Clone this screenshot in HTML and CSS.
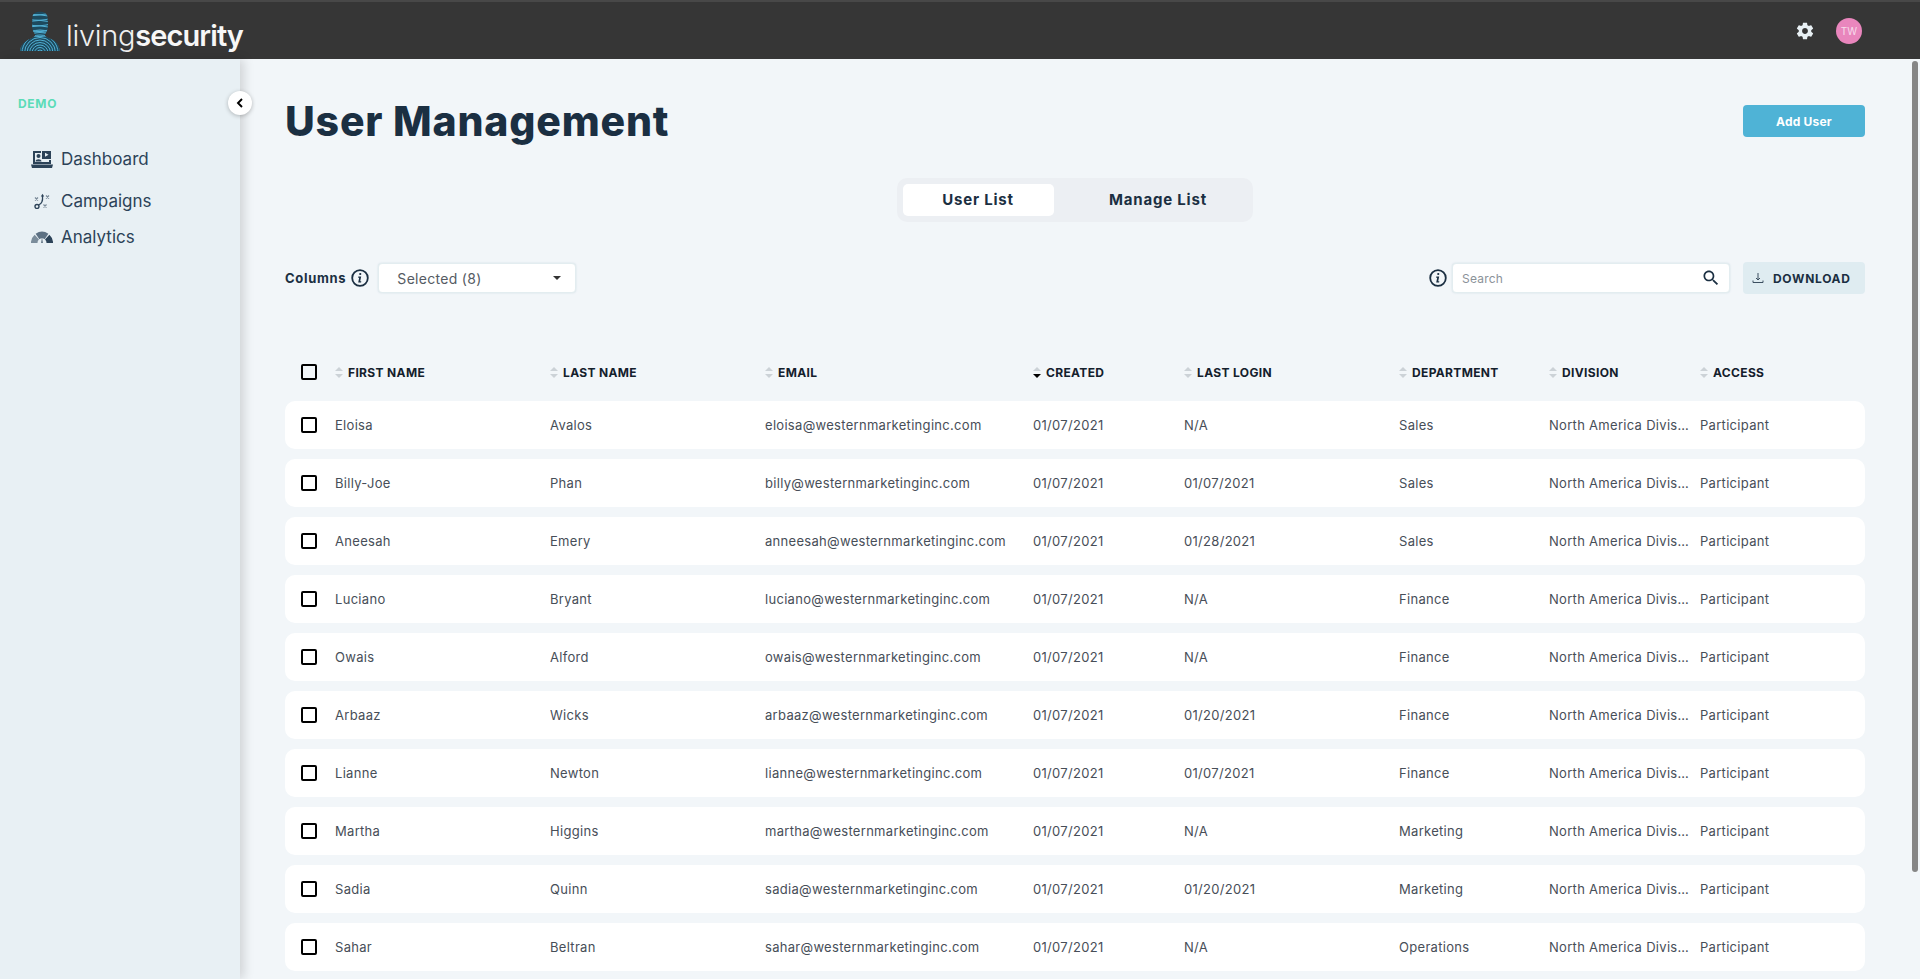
FILE: index.html
```html
<!DOCTYPE html>
<html lang="en">
<head>
    <meta charset="UTF-8">
    <meta name="viewport" content="width=device-width, initial-scale=1.0">
    <title>User Management</title>
    <link rel="stylesheet" href="styles.css">
</head>
<body>

    <header class="topbar">
        <div class="logo">
            <svg class="logo-mark" viewBox="0 0 40 40" width="40" height="40">
                <defs>
                    <clipPath id="person">
                        <path d="M12.500 6 C12.500 -1 27.500 -1 27.500 6 L28 14 C28 19 26 22 24.500 24 C26 27 33 28 36 31 C38 33 39 36 40 40 L0 40 C1 35 2 33 5 31 C8 28 14 27 15.500 24 C14 22 12 19 12 14 Z"/>
                    </clipPath>
                </defs>
                <g clip-path="url(#person)" fill="none" stroke="#52b0d4" stroke-width="1">
                    <rect x="0" y="0" width="40" height="40" fill="#1d4a5e" stroke="none"/>
                    <path d="M8 2.500 Q20 5.500 32 1.500"/>
                    <path d="M8 5 Q20 2.500 32 5.500"/>
                    <path d="M8 8 Q20 11 32 7"/>
                    <path d="M8 10.500 Q20 8 32 11"/>
                    <path d="M8 13.500 Q20 16.500 32 12.500"/>
                    <path d="M8 16 Q20 13.500 32 16.500"/>
                    <path d="M8 19 Q20 22 32 18"/>
                    <path d="M8 21.500 Q20 19 32 22"/>
                    <path d="M8 24.500 Q20 27 32 24"/>
                    <circle cx="20" cy="42" r="3"/>
                    <circle cx="20" cy="42" r="5.500"/>
                    <circle cx="20" cy="42" r="8"/>
                    <circle cx="20" cy="42" r="10.500"/>
                    <circle cx="20" cy="42" r="13"/>
                    <circle cx="20" cy="42" r="15.500"/>
                    <circle cx="20" cy="42" r="18"/>
                    <circle cx="20" cy="42" r="20.500"/>
                    <circle cx="20" cy="42" r="23"/>
                </g>
            </svg>
            <span class="logo-text">living<b>security</b></span>
        </div>
        <div class="topbar-right">
            <svg class="gear" viewBox="0 0 24 24" width="20" height="20"><path fill="#e8f0f4" d="M19.430 12.980c.04-.32.07-.64.07-.98s-.03-.66-.07-.98l2.110-1.650c.19-.15.24-.42.12-.64l-2-3.460c-.12-.22-.39-.3-.61-.22l-2.490 1c-.52-.4-1.080-.73-1.690-.98l-.38-2.650C14.460 2.180 14.250 2 14 2h-4c-.25 0-.46.18-.49.42l-.38 2.650c-.61.25-1.170.59-1.690.98l-2.490-1c-.23-.09-.49 0-.61.22l-2 3.460c-.13.22-.07.49.12.64l2.110 1.650c-.04.32-.07.65-.07.98s.03.66.07.98l-2.110 1.650c-.19.15-.24.42-.12.64l2 3.460c.12.22.39.3.61.22l2.490-1c.52.4 1.080.73 1.690.98l.38 2.650c.03.24.24.42.49.42h4c.25 0 .46-.18.49-.42l.38-2.650c.61-.25 1.170-.59 1.690-.98l2.490 1c.23.09.49 0 .61-.22l2-3.460c.12-.22.07-.49-.12-.64l-2.110-1.650zM12 15.500c-1.930 0-3.500-1.570-3.500-3.500s1.570-3.500 3.500-3.500 3.500 1.570 3.500 3.500-1.570 3.500-3.500 3.500z"/></svg>
            <div class="avatar">TW</div>
        </div>
    </header>

    <div class="layout">
        <aside class="sidebar">
            <div class="sidebar-label">DEMO</div>
            <button class="collapse-btn" aria-label="Collapse">
                <svg viewBox="0 0 10 12" width="8" height="10"><path d="M7.500 1 L2.500 6 L7.500 11" fill="none" stroke="#000" stroke-width="2.400"/></svg>
            </button>
            <nav class="nav">
                <a class="nav-item nav-dashboard">
                    <span class="nav-icon">
                        <svg viewBox="0 0 22 17" width="22" height="17">
                            <path fill="#2c4358" d="M2 0 H10 V2 H4 V11 H18 V9 H20 V13 H2 Z"/>
                            <rect x="11" y="0" width="9" height="8" fill="#2c4358"/>
                            <path d="M14 1.800 L17.500 3.800 L14 5.800 Z" fill="#e8f0f4"/>
                            <circle cx="7.500" cy="5" r="2" fill="#2c4358"/>
                            <path d="M4.500 10.500 C4.500 7.500 10.500 7.500 10.500 10.500 Z" fill="#2c4358"/>
                            <path d="M0 13.500 H22 L21 17 H1 Z" fill="#2c4358"/>
                        </svg>
                    </span>
                    Dashboard
                </a>
                <a class="nav-item nav-campaigns">
                    <span class="nav-icon">
                        <svg viewBox="0 0 16 16" width="16" height="16" fill="none" stroke="#2c4358">
                            <circle cx="3" cy="13.500" r="2" stroke-width="1.400"/>
                            <path d="M4.500 12 C7.500 11 9 8 8.500 3" stroke-width="1.300"/>
                            <path d="M6.800 3.500 L8.500 .8 L10.200 3.500 Z" fill="#2c4358" stroke="none"/>
                            <path d="M1 4.500 L4 7.500 M4 4.500 L1 7.500 M12 2.500 L15 5.500 M15 2.500 L12 5.500 M9.500 11.500 L12.500 14.500 M12.500 11.500 L9.500 14.500" stroke="#7a8a98" stroke-width="1.200"/>
                        </svg>
                    </span>
                    Campaigns
                </a>
                <a class="nav-item nav-analytics">
                    <span class="nav-icon">
                        <svg viewBox="0 0 22 12" width="22" height="12" fill="none" stroke-width="6.500">
                            <path stroke="#7b8d9b" d="M3.200 12 A7.800 7.800 0 0 1 5.800 6.100"/>
                            <path stroke="#5d7183" d="M6.500 5.500 A7.800 7.800 0 0 1 15.500 5.500"/>
                            <path stroke="#2c4358" d="M16.200 6.100 A7.800 7.800 0 0 1 18.800 12"/>
                            <path fill="#2c4358" stroke="none" d="M10.300 12 L11 6.500 L11.700 12 Z"/>
                        </svg>
                    </span>
                    Analytics
                </a>
            </nav>
        </aside>

        <main class="main">
            <div class="page-head">
                <h1 class="page-title">User Management</h1>
                <button class="btn-add">Add User</button>
            </div>

            <div class="tabs-wrap">
                <div class="tabs">
                    <div class="tab active">User List</div>
                    <div class="tab">Manage List</div>
                </div>
            </div>

            <div class="toolbar">
                <div class="toolbar-left">
                    <span class="columns-label">Columns</span>
                    <svg class="info" viewBox="0 0 18 18" width="18" height="18"><circle cx="9" cy="9" r="7.800" fill="none" stroke="#1b2f42" stroke-width="1.800"/><path fill="#1b2f42" d="M9.300 3.900 a1.100 1.100 0 1 1 -.1 2.200 a1.100 1.100 0 0 1 .1 -2.200z M7.300 7.600 H10.200 L9.200 12.300 H10.300 L10.100 13.500 H7.200 L8.200 8.800 H7.100z"/></svg>
                    <div class="select">
                        <span>Selected (8)</span>
                        <span class="caret"></span>
                    </div>
                </div>
                <div class="toolbar-right">
                    <svg class="info" viewBox="0 0 18 18" width="18" height="18"><circle cx="9" cy="9" r="7.800" fill="none" stroke="#1b2f42" stroke-width="1.800"/><path fill="#1b2f42" d="M9.300 3.900 a1.100 1.100 0 1 1 -.1 2.200 a1.100 1.100 0 0 1 .1 -2.200z M7.300 7.600 H10.200 L9.200 12.300 H10.300 L10.100 13.500 H7.200 L8.200 8.800 H7.100z"/></svg>
                    <div class="search">
                        <span class="search-text">Search</span>
                        <svg viewBox="0 0 24 24" width="20" height="20"><path fill="#1b2f42" d="M15.500 14h-.79l-.28-.27C15.410 12.590 16 11.110 16 9.500 16 5.910 13.090 3 9.500 3S3 5.910 3 9.500 5.910 16 9.500 16c1.610 0 3.090-.59 4.230-1.570l.27.28v.79l5 4.990L20.490 19l-4.990-5zm-6 0C7.010 14 5 11.990 5 9.500S7.010 5 9.500 5 14 7.010 14 9.500 11.990 14 9.500 14z"/></svg>
                    </div>
                    <button class="btn-download">
                        <svg viewBox="0 0 12 12" width="12" height="12" fill="none" stroke="#3c4f60" stroke-width="1"><path d="M6 1 V8 M4 6 L6 8 L8 6 M1 8.500 V10.500 H11 V8.500" /></svg>
                        DOWNLOAD
                    </button>
                </div>
            </div>

            <div class="table">
                <div class="table-head">
                    <div class="cell-check"><span class="checkbox"></span></div>
                    <div class="th"><span class="sort"></span>FIRST NAME</div>
                    <div class="th"><span class="sort"></span>LAST NAME</div>
                    <div class="th"><span class="sort"></span>EMAIL</div>
                    <div class="th"><span class="sort sort-down"></span>CREATED</div>
                    <div class="th"><span class="sort"></span>LAST LOGIN</div>
                    <div class="th"><span class="sort"></span>DEPARTMENT</div>
                    <div class="th"><span class="sort"></span>DIVISION</div>
                    <div class="th"><span class="sort"></span>ACCESS</div>
                </div>

                <div class="row"><div class="cell-check"><span class="checkbox"></span></div><div class="td">Eloisa</div><div class="td">Avalos</div><div class="td">eloisa@westernmarketinginc.com</div><div class="td">01/07/2021</div><div class="td">N/A</div><div class="td">Sales</div><div class="td">North America Division</div><div class="td">Participant</div></div>
                <div class="row"><div class="cell-check"><span class="checkbox"></span></div><div class="td">Billy-Joe</div><div class="td">Phan</div><div class="td">billy@westernmarketinginc.com</div><div class="td">01/07/2021</div><div class="td">01/07/2021</div><div class="td">Sales</div><div class="td">North America Division</div><div class="td">Participant</div></div>
                <div class="row"><div class="cell-check"><span class="checkbox"></span></div><div class="td">Aneesah</div><div class="td">Emery</div><div class="td">anneesah@westernmarketinginc.com</div><div class="td">01/07/2021</div><div class="td">01/28/2021</div><div class="td">Sales</div><div class="td">North America Division</div><div class="td">Participant</div></div>
                <div class="row"><div class="cell-check"><span class="checkbox"></span></div><div class="td">Luciano</div><div class="td">Bryant</div><div class="td">luciano@westernmarketinginc.com</div><div class="td">01/07/2021</div><div class="td">N/A</div><div class="td">Finance</div><div class="td">North America Division</div><div class="td">Participant</div></div>
                <div class="row"><div class="cell-check"><span class="checkbox"></span></div><div class="td">Owais</div><div class="td">Alford</div><div class="td">owais@westernmarketinginc.com</div><div class="td">01/07/2021</div><div class="td">N/A</div><div class="td">Finance</div><div class="td">North America Division</div><div class="td">Participant</div></div>
                <div class="row"><div class="cell-check"><span class="checkbox"></span></div><div class="td">Arbaaz</div><div class="td">Wicks</div><div class="td">arbaaz@westernmarketinginc.com</div><div class="td">01/07/2021</div><div class="td">01/20/2021</div><div class="td">Finance</div><div class="td">North America Division</div><div class="td">Participant</div></div>
                <div class="row"><div class="cell-check"><span class="checkbox"></span></div><div class="td">Lianne</div><div class="td">Newton</div><div class="td">lianne@westernmarketinginc.com</div><div class="td">01/07/2021</div><div class="td">01/07/2021</div><div class="td">Finance</div><div class="td">North America Division</div><div class="td">Participant</div></div>
                <div class="row"><div class="cell-check"><span class="checkbox"></span></div><div class="td">Martha</div><div class="td">Higgins</div><div class="td">martha@westernmarketinginc.com</div><div class="td">01/07/2021</div><div class="td">N/A</div><div class="td">Marketing</div><div class="td">North America Division</div><div class="td">Participant</div></div>
                <div class="row"><div class="cell-check"><span class="checkbox"></span></div><div class="td">Sadia</div><div class="td">Quinn</div><div class="td">sadia@westernmarketinginc.com</div><div class="td">01/07/2021</div><div class="td">01/20/2021</div><div class="td">Marketing</div><div class="td">North America Division</div><div class="td">Participant</div></div>
                <div class="row"><div class="cell-check"><span class="checkbox"></span></div><div class="td">Sahar</div><div class="td">Beltran</div><div class="td">sahar@westernmarketinginc.com</div><div class="td">01/07/2021</div><div class="td">N/A</div><div class="td">Operations</div><div class="td">North America Division</div><div class="td">Participant</div></div>
            </div>
        </main>

        <div class="scroll-thumb"></div>
    </div>

</body>
</html>
```

FILE: styles.css
```css
* {
    box-sizing: border-box;
}

body {
    font-family: Inter, "Open Sans", sans-serif;
    background-color: #f2f6f9;
    margin: 0;
    padding: 0;
    height: 100vh;
    overflow: hidden;
    display: flex;
    flex-direction: column;
    color: #1b2f42;
}

button {
    font-family: inherit;
    border: none;
    cursor: pointer;
}

/* top bar */
.topbar {
    height: 59px;
    flex: none;
    background-color: #363636;
    border-top: 2px solid #484848;
    display: flex;
    align-items: center;
    justify-content: space-between;
    padding: 0 58px 0 20px;
}

.logo {
    display: flex;
    align-items: flex-end;
    gap: 6px;
    height: 40px;
}

.logo-text {
    font-size: 29px;
    font-weight: 300;
    color: #f0f0f0;
    line-height: 36px;
    letter-spacing: -0.3px;
    margin-bottom: -3px;
}

.logo-text b {
    font-weight: 600;
    color: #f7f7f7;
    letter-spacing: -0.9px;
}

.topbar-right {
    display: flex;
    align-items: center;
    gap: 21px;
}

.gear {
    display: block;
}

.avatar {
    width: 26px;
    height: 26px;
    border-radius: 50%;
    background-color: #e986bd;
    color: #f7dcec;
    font-size: 10px;
    display: flex;
    align-items: center;
    justify-content: center;
}

/* layout */
.layout {
    flex: 1;
    display: flex;
    min-height: 0;
    position: relative;
}

.sidebar {
    width: 240px;
    flex: none;
    position: relative;
    background-color: #e8f0f4;
    box-shadow: 4px 0 10px rgba(0, 0, 0, 0.14);
    padding: 37px 0 0 18px;
    z-index: 1;
}

.sidebar-label {
    font-size: 12px;
    font-weight: 700;
    color: #5bdcb8;
    line-height: 15px;
    letter-spacing: 0.7px;
}

.collapse-btn {
    position: absolute;
    top: 32px;
    left: 228px;
    width: 24px;
    height: 24px;
    border-radius: 50%;
    background-color: white;
    box-shadow: 0 1px 4px rgba(0, 0, 0, 0.25);
    padding: 0;
    display: flex;
    align-items: center;
    justify-content: center;
}

.nav {
    margin-top: 37px;
    margin-left: 13px;
    display: flex;
    flex-direction: column;
}

.nav-item {
    display: flex;
    align-items: center;
    font-size: 17px;
    line-height: 22px;
    color: #2c4358;
}

.nav-campaigns {
    margin-top: 20px;
}

.nav-analytics {
    margin-top: 14px;
}

.nav-icon {
    width: 30px;
    flex: none;
    display: flex;
    justify-content: center;
    padding-right: 8px;
}

/* main */
.main {
    flex: 1;
    min-width: 0;
    overflow: hidden;
    padding: 0 55px 0 45px;
}

.scroll-thumb {
    position: absolute;
    top: 2px;
    right: 2px;
    width: 6px;
    height: 811px;
    background-color: #868686;
    border-radius: 3px;
}

.page-head {
    display: flex;
    align-items: center;
    justify-content: space-between;
    height: 62px;
    margin-top: 31px;
}

.page-title {
    margin: 0;
    font-size: 41px;
    font-weight: 800;
    line-height: 50px;
    color: #1b2f42;
    letter-spacing: 0.8px;
}

.btn-add {
    width: 122px;
    height: 32px;
    border-radius: 4px;
    background-color: #4fb3d6;
    color: white;
    font-size: 12px;
    font-weight: 700;
    letter-spacing: 0.2px;
}

.tabs-wrap {
    display: flex;
    justify-content: center;
    margin-top: 26px;
    padding-right: 1px;
}

.tabs {
    width: 356px;
    height: 44px;
    background-color: #eceff3;
    border-radius: 10px;
    padding: 6px;
    display: flex;
}

.tab {
    width: 151px;
    height: 32px;
    border-radius: 5px;
    font-size: 15px;
    font-weight: 700;
    line-height: 32px;
    text-align: center;
    letter-spacing: 0.8px;
    color: #1b2f42;
}

.tab.active {
    background-color: white;
}

.tab + .tab {
    flex: 1;
    padding-left: 16px;
}

.toolbar {
    display: flex;
    align-items: center;
    justify-content: space-between;
    margin-top: 40px;
    height: 32px;
}

.toolbar-left, .toolbar-right {
    display: flex;
    align-items: center;
}

.columns-label {
    font-size: 13px;
    font-weight: 700;
    color: #1b2f42;
    margin-right: 5px;
    letter-spacing: 0.7px;
}

.select {
    width: 198px;
    height: 30px;
    margin-left: 9px;
    background-color: white;
    border: 1px solid #e3edf0;
    box-shadow: 0 0 2px rgba(120, 160, 175, 0.25);
    border-radius: 4px;
    padding: 0 14px 0 18px;
    display: flex;
    align-items: center;
    justify-content: space-between;
    font-size: 14px;
    color: #555b63;
    letter-spacing: 0.3px;
}

.caret {
    width: 0;
    height: 0;
    border-left: 4px solid transparent;
    border-right: 4px solid transparent;
    border-top: 4px solid #333;
}

.search {
    width: 278px;
    height: 30px;
    margin-left: 5px;
    background-color: white;
    border: 1px solid #e3edf0;
    box-shadow: 0 0 2px rgba(120, 160, 175, 0.25);
    border-radius: 4px;
    padding: 0 8px 0 9px;
    display: flex;
    align-items: center;
    justify-content: space-between;
}

.search-text {
    font-size: 12px;
    color: #8b9299;
    letter-spacing: 0.2px;
}

.btn-download {
    width: 122px;
    height: 32px;
    margin-left: 13px;
    border-radius: 4px;
    background-color: #dfecf1;
    color: #1b2f42;
    font-size: 12px;
    font-weight: 700;
    letter-spacing: 0.7px;
    display: flex;
    align-items: center;
    gap: 9px;
    padding: 0 0 0 9px;
}

/* table */
.table {
    margin-top: 64px;
}

.table-head, .row {
    display: grid;
    grid-template-columns: 50px 215px 215px 268px 151px 215px 150px 151px 1fr;
    align-items: center;
}

.table-head {
    height: 28px;
    margin-bottom: 15px;
}

.row {
    height: 48px;
    margin-bottom: 10px;
    background-color: white;
    border-radius: 10px;
}

.cell-check {
    display: flex;
    padding-left: 16px;
}

.checkbox {
    width: 16px;
    height: 16px;
    border: 2px solid #000;
    border-radius: 2px;
    background-color: transparent;
}

.th {
    font-size: 12px;
    font-weight: 700;
    color: #14202c;
    letter-spacing: 0.35px;
    display: flex;
    align-items: center;
    gap: 5px;
}

.sort {
    width: 8px;
    height: 11px;
    flex: none;
    display: flex;
    flex-direction: column;
    justify-content: space-between;
}

.sort::before, .sort::after {
    content: "";
    width: 0;
    height: 0;
    border-left: 4px solid transparent;
    border-right: 4px solid transparent;
}

.sort::before {
    border-bottom: 4px solid #ccd2d7;
}

.sort::after {
    border-top: 4px solid #ccd2d7;
}

.sort-down::after {
    border-top-color: #000;
}

.td {
    font-size: 13px;
    color: #474e58;
    letter-spacing: 0.3px;
    white-space: nowrap;
    overflow: hidden;
    text-overflow: ellipsis;
    padding-right: 8px;
}
```
